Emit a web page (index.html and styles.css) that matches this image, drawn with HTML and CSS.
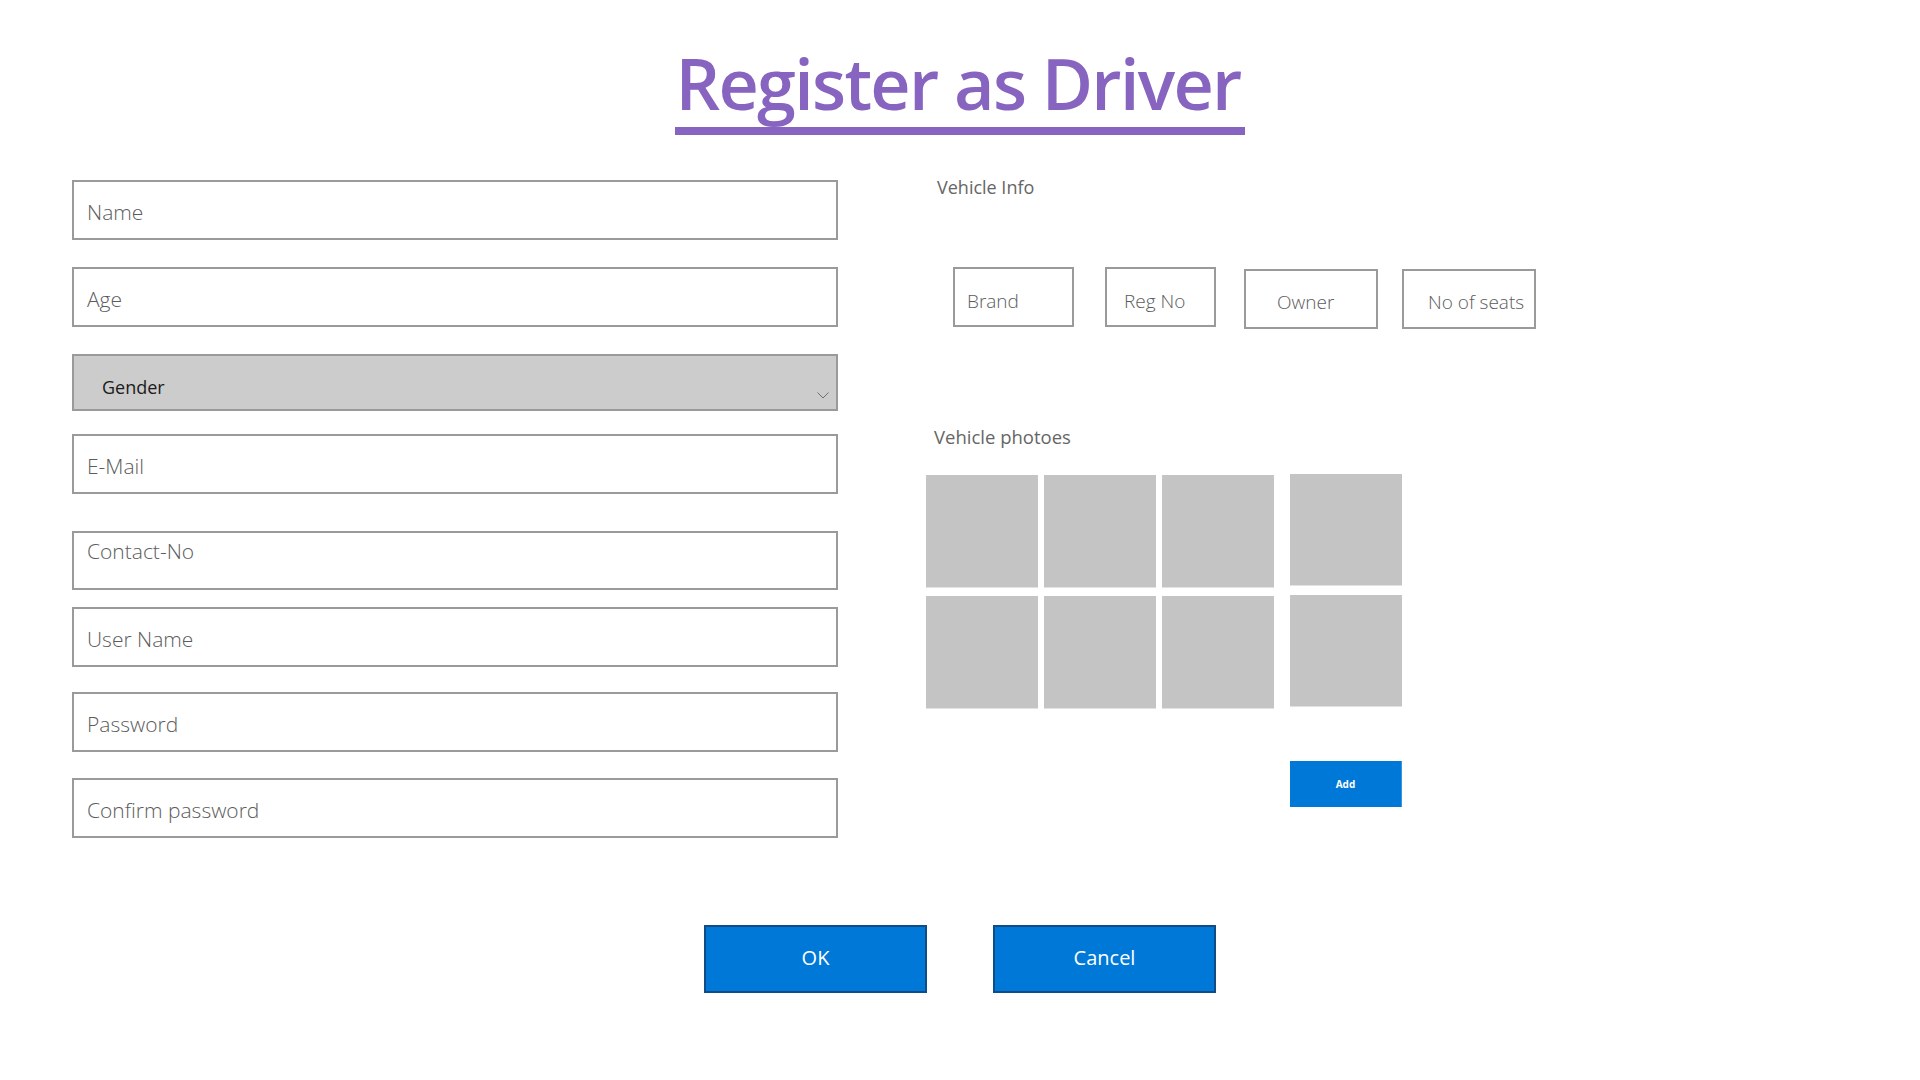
FILE: index.html
```html
<!DOCTYPE html>
<html lang="en">
<head>
<meta charset="utf-8">
<title>Register as Driver</title>
<link rel="stylesheet" href="styles.css">
</head>
<body>
<header class="title-wrap">
  <h1 class="title">Register as Driver</h1>
</header>
<main class="form">
  <section class="personal">
    <div class="field f-name">Name</div>
    <div class="field f-age">Age</div>
    <div class="select f-gender"><span>Gender</span><svg class="chev" width="12" height="7" viewBox="0 0 12 7"><path d="M0.5 0.5 L6 6 L11.5 0.5" fill="none" stroke="#6e6e6e" stroke-width="1"/></svg></div>
    <div class="field f-mail">E-Mail</div>
    <div class="field f-contact">Contact-No</div>
    <div class="field f-user">User Name</div>
    <div class="field f-pass">Password</div>
    <div class="field f-confirm">Confirm password</div>
  </section>
  <section class="vehicle">
    <div class="label label-info">Vehicle Info</div>
    <div class="info-row">
      <div class="vbox v-brand">Brand</div>
      <div class="vbox v-reg">Reg No</div>
      <div class="vbox v-owner">Owner</div>
      <div class="vbox v-seats">No of seats</div>
    </div>
    <div class="label label-photos">Vehicle photoes</div>
    <div class="photos">
      <div class="tile"></div>
      <div class="tile"></div>
      <div class="tile"></div>
      <div class="tile tile-side"></div>
      <div class="tile"></div>
      <div class="tile"></div>
      <div class="tile"></div>
      <div class="tile tile-side"></div>
      <button class="add-btn">Add</button>
    </div>
  </section>
</main>
<footer class="actions">
  <button class="btn">OK</button>
  <button class="btn">Cancel</button>
</footer>
</body>
</html>
```
FILE: styles.css
```css
* { box-sizing: border-box; }
html, body { margin: 0; padding: 0; background: #ffffff; }
body {
  width: 1920px;
  height: 1080px;
  font-family: "Open Sans", "Noto Sans", sans-serif;
  overflow: hidden;
}

.title-wrap {
  text-align: center;
  padding-top: 48px;
}
.title {
  display: inline-block;
  margin: 0;
  font-size: 70px;
  line-height: 70px;
  font-weight: 600;
  letter-spacing: -1.7px;
  color: #8764c0;
  padding: 0 4px 9px 0;
  border-bottom: 8px solid #8764c0;
}

.form {
  display: flex;
  padding: 40px 0 0 72px;
}

.personal {
  width: 766px;
  padding-top: 5px;
  display: flex;
  flex-direction: column;
}

.field {
  height: 60px;
  border: 2px solid #9a9a9a;
  padding: 18px 0 0 13px;
  font-size: 21px;
  font-weight: 300;
  line-height: 24px;
  color: #5c5c5c;
  background: #fff;
}
.f-age { margin-top: 27px; }
.f-mail { margin-top: 23px; }
.f-contact { margin-top: 37px; height: 59px; padding-top: 6px; }
.f-user { margin-top: 17px; }
.f-pass { margin-top: 25px; }
.f-confirm { margin-top: 26px; }

.select {
  margin-top: 27px;
  height: 57px;
  border: 2px solid #9a9a9a;
  background: #cccccc;
  display: flex;
  align-items: flex-start;
  justify-content: space-between;
  padding: 19px 7px 0 28px;
  font-size: 18px;
  line-height: 24px;
  color: #1b1b1b;
}
.chev { margin-top: 17px; }

.vehicle {
  margin-left: 88px;
  display: flex;
  flex-direction: column;
}
.label {
  font-size: 18px;
  line-height: 24px;
  color: #666666;
}
.label-info { margin-left: 11px; }
.label-photos { margin-left: 8px; margin-top: 96px; font-size: 18.5px; }

.info-row {
  display: flex;
  align-items: flex-start;
  margin-top: 68px;
  margin-left: 27px;
}
.vbox {
  height: 60px;
  border: 2px solid #9a9a9a;
  font-size: 19px;
  font-weight: 300;
  line-height: 24px;
  color: #5c5c5c;
  padding-top: 20px;
  white-space: nowrap;
}
.v-brand { width: 121px; padding-left: 12px; }
.v-reg { width: 111px; margin-left: 31px; padding-left: 17px; }
.v-owner { width: 134px; margin-left: 28px; margin-top: 2px; padding-left: 31px; padding-top: 19px; }
.v-seats { width: 134px; margin-left: 24px; margin-top: 2px; padding-left: 24px; padding-top: 19px; }

.photos {
  margin-top: 26px;
  display: grid;
  grid-template-columns: 112px 112px 112px 122px;
  column-gap: 6px;
  row-gap: 9px;
}
.tile {
  width: 112px;
  height: 112px;
  background: #c4c4c4;
  box-shadow: 0 1px 0 #e2e2e2;
}
.tile-side { justify-self: end; height: 111px; margin-top: -1px; }

.add-btn {
  grid-column: 4;
  justify-self: end;
  margin-top: 44px;
  width: 112px;
  height: 46px;
  border: none;
  border-right: 1px solid #3b95e0;
  background: #0078d7;
  color: #ffffff;
  font-family: "Open Sans", "Noto Sans", sans-serif;
  font-weight: 700;
  font-size: 10px;
  padding: 0;
}

.actions {
  display: flex;
  justify-content: center;
  gap: 66px;
  margin-top: 87px;
}
.btn {
  width: 223px;
  height: 68px;
  background: #0078d7;
  border: 2px solid #0f4c88;
  color: #ffffff;
  font-family: "Open Sans", "Noto Sans", sans-serif;
  font-size: 20px;
  padding: 0 0 4px 0;
}
```
